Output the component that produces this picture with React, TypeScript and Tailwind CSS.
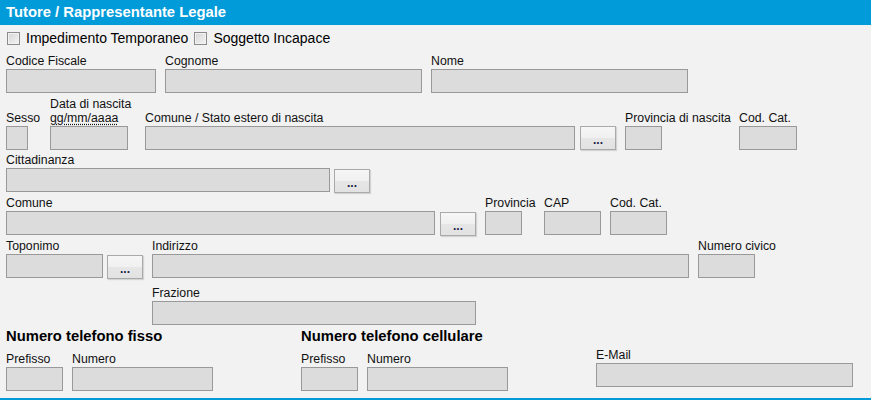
const font = { fontFamily: '"Liberation Sans", Arial, sans-serif' }

function Field({ label, w, ml = '' }: { label: React.ReactNode; w: string; ml?: string }) {
  return (
    <div className={`flex flex-none flex-col ${w} ${ml}`}>
      <div className="h-[15px] whitespace-nowrap text-[12.3px] leading-[14px] text-[#111]">{label}</div>
      <div className="h-[24px] border border-[#999] bg-[#dcdcdc]" />
    </div>
  )
}

function Dots({ ml }: { ml: string }) {
  return (
    <button
      className={`flex h-[24px] w-[36px] flex-none items-center justify-center border border-[#a9a9a9] bg-[linear-gradient(#f6f6f6_0%,#f0f0f0_50%,#e6e6e6_50%,#e2e2e2_100%)] pt-[3px] text-[12px] font-bold leading-none text-[#1c1c44] shadow-[1px_1px_1px_rgba(0,0,0,0.12)] ${ml}`}
    >
      ...
    </button>
  )
}

function Check({ label }: { label: string }) {
  return (
    <div className="flex items-center">
      <span className="h-[13px] w-[13px] border border-[#8c8c8c] bg-linear-to-br from-[#d6d6d6] to-[#f4f4f4] shadow-[inset_0_0_0_1px_#f2f2f2]" />
      <span className="ml-[6px] text-[14px] leading-[16px] text-black">{label}</span>
    </div>
  )
}

export default function App() {
  return (
    <div className="h-[400px] w-[871px] overflow-hidden bg-[#f2f2f2]" style={font}>
      <div className="h-[25px] bg-[#029bd9] pl-[6px] text-[14.8px] font-bold leading-[25px] text-white">
        Tutore / Rappresentante Legale
      </div>

      <div className="pl-[6px]">
        <div className="mt-[5px] flex h-[16px] items-center gap-[6px] pl-px">
          <Check label="Impedimento Temporaneo" />
          <Check label="Soggetto Incapace" />
        </div>

        <div className="mt-[8px] flex items-end">
          <Field label="Codice Fiscale" w="w-[150px]" />
          <Field label="Cognome" w="w-[257px]" ml="ml-[9px]" />
          <Field label="Nome" w="w-[257px]" ml="ml-[9px]" />
        </div>

        <div className="mt-[4px] flex items-end">
          <Field label="Sesso" w="w-[22px]" />
          <div className="ml-[22px] flex w-[78px] flex-none flex-col">
            <div className="h-[14px] whitespace-nowrap text-[12.3px] leading-[14px] text-[#111]">Data di nascita</div>
            <div className="h-[15px] whitespace-nowrap text-[12.3px] leading-[14px] text-[#111]">
              <span className="underline decoration-dotted underline-offset-2">gg/mm/aaaa</span>
            </div>
            <div className="h-[24px] border border-[#999] bg-[#dcdcdc]" />
          </div>
          <Field label="Comune / Stato estero di nascita" w="w-[430px]" ml="ml-[17px]" />
          <Dots ml="ml-[5px]" />
          <Field label="Provincia di nascita" w="w-[37px]" ml="ml-[9px]" />
          <Field label="Cod. Cat." w="w-[58px]" ml="ml-[77px]" />
        </div>

        <div className="mt-[3px] flex items-end">
          <Field label="Cittadinanza" w="w-[324px]" />
          <Dots ml="ml-[4px] translate-y-px" />
        </div>

        <div className="mt-[4px] flex items-end">
          <Field label="Comune" w="w-[429px]" />
          <Dots ml="ml-[5px] translate-y-px" />
          <Field label="Provincia" w="w-[37px]" ml="ml-[9px]" />
          <Field label="CAP" w="w-[57px]" ml="ml-[22px]" />
          <Field label="Cod. Cat." w="w-[57px]" ml="ml-[9px]" />
        </div>

        <div className="mt-[4px] flex items-end">
          <Field label="Toponimo" w="w-[97px]" />
          <Dots ml="ml-[4px] translate-y-px" />
          <Field label="Indirizzo" w="w-[537px]" ml="ml-[9px]" />
          <Field label="Numero civico" w="w-[57px]" ml="ml-[9px]" />
        </div>

        <div className="mt-[8px] flex items-end pl-[146px]">
          <Field label="Frazione" w="w-[324px]" />
        </div>

        <div className="mt-[3px] flex">
          <div className="flex w-[295px] flex-none flex-col">
            <div className="h-[17px] text-[14.8px] font-bold leading-[17px] text-black">Numero telefono fisso</div>
            <div className="mt-[7px] flex items-end">
              <Field label="Prefisso" w="w-[57px]" />
              <Field label="Numero" w="w-[141px]" ml="ml-[9px]" />
            </div>
          </div>
          <div className="flex w-[295px] flex-none flex-col">
            <div className="h-[17px] text-[14.8px] font-bold leading-[17px] text-black">Numero telefono cellulare</div>
            <div className="mt-[7px] flex items-end">
              <Field label="Prefisso" w="w-[57px]" />
              <Field label="Numero" w="w-[141px]" ml="ml-[9px]" />
            </div>
          </div>
          <div className="pt-[20px]">
            <Field label="E-Mail" w="w-[257px]" />
          </div>
        </div>
      </div>

      <div className="mt-[7px] h-[25px] bg-[#029bd9]" />
    </div>
  )
}
